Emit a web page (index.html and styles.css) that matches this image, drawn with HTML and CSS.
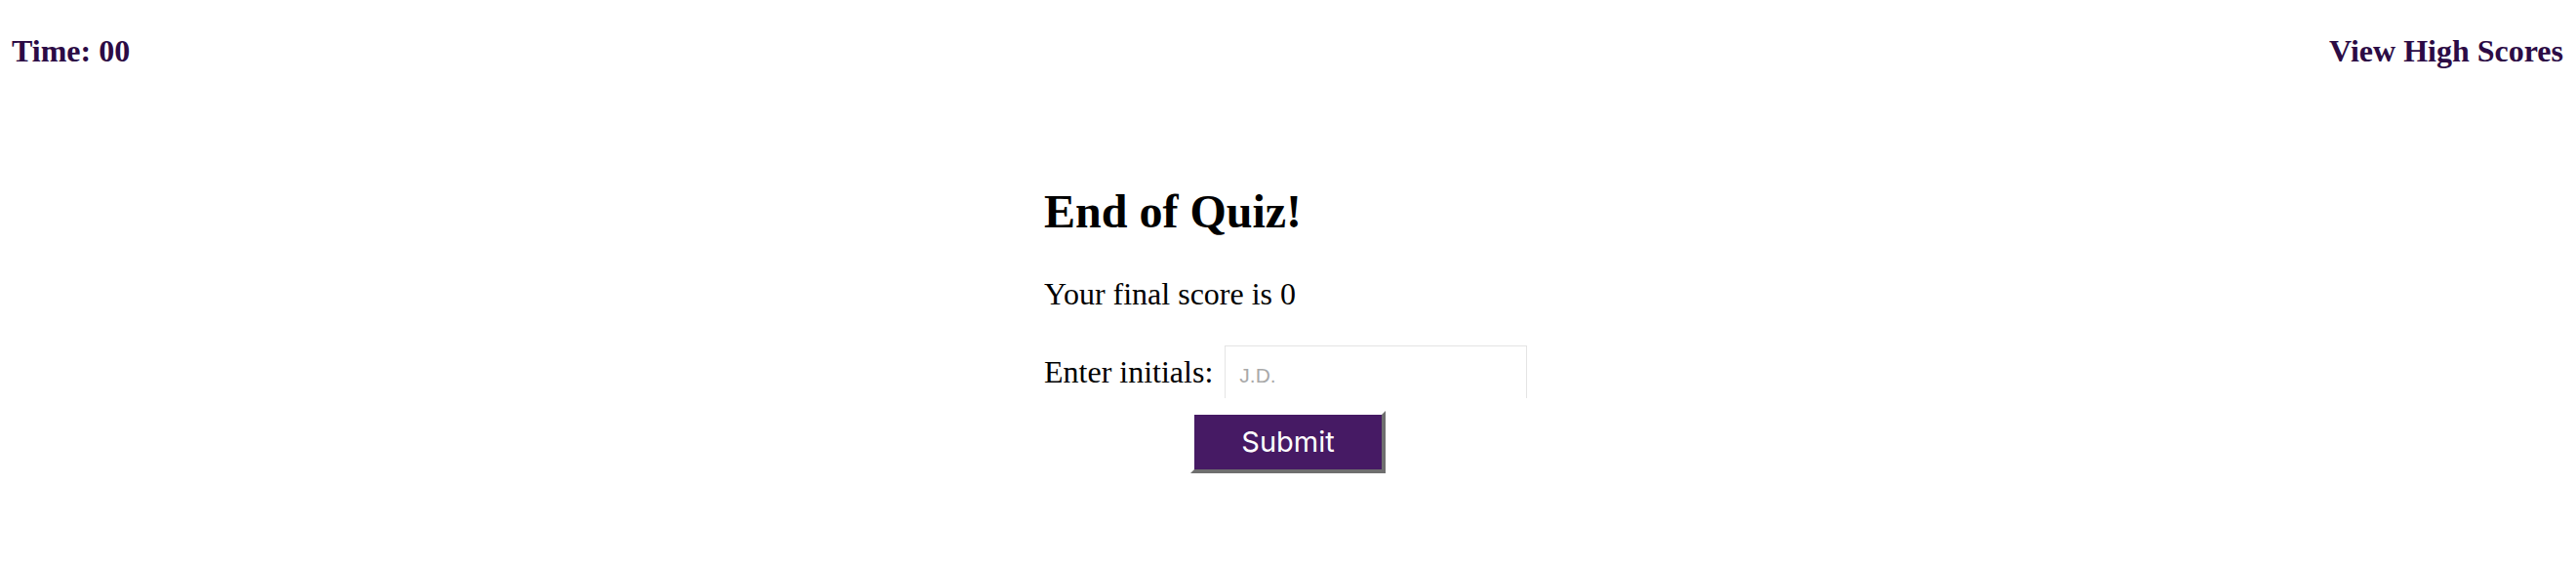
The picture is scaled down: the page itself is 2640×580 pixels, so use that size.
FILE: index.html
```html
<!DOCTYPE html>
<html lang="en">
<head>
<meta charset="utf-8">
<title>Quiz</title>
<link rel="stylesheet" href="styles.css">
</head>
<body>
<header class="topbar">
  <span class="timer">Time: 00</span>
  <a class="scores-link" href="#">View High Scores</a>
</header>
<main class="panel">
  <h1 class="title">End of Quiz!</h1>
  <p class="score">Your final score is 0</p>
  <form class="entry">
    <div class="entry-row">
      <label class="entry-label" for="initials">Enter initials:</label>
      <input class="entry-input" id="initials" type="text" placeholder="J.D.">
    </div>
    <div class="entry-actions">
      <button class="submit-btn" type="button">Submit</button>
    </div>
  </form>
</main>
</body>
</html>
```
FILE: styles.css
```css
html, body {
  margin: 0;
  padding: 0;
  background: #ffffff;
}

body {
  font-family: "Liberation Serif", "Times New Roman", serif;
  color: #000000;
}

.topbar {
  display: flex;
  justify-content: space-between;
  align-items: baseline;
  padding: 34px 13px 0 12px;
}

.timer,
.scores-link {
  font-size: 32px;
  font-weight: bold;
  line-height: 1.15;
  color: #2c0b45;
  text-decoration: none;
}

.panel {
  width: 500px;
  margin: 118px auto 0;
}

.title {
  margin: 0;
  font-size: 48px;
  font-weight: bold;
  line-height: 1.15;
}

.score {
  margin: 39px 0 0;
  font-size: 32px;
  line-height: 1.15;
}

.entry {
  margin: 34px 0 0;
}

.entry-row {
  display: flex;
  align-items: baseline;
  gap: 12px;
}

.entry-label {
  font-size: 32px;
  line-height: 1.15;
}

.entry-input {
  width: 310px;
  box-sizing: border-box;
  margin: 0;
  padding: 18px 14px 11px;
  border: 1px solid #e4e4e4;
  border-bottom: none;
  font-family: "Liberation Sans", Arial, sans-serif;
  font-size: 21px;
  line-height: 1.15;
  outline: none;
  background: #ffffff;
}

.entry-input::placeholder {
  color: #a9a9a9;
}

.entry-actions {
  display: flex;
  justify-content: center;
  margin-top: 13px;
}

.submit-btn {
  width: 200px;
  height: 64px;
  box-sizing: border-box;
  margin: 0;
  padding: 0;
  border-width: 4px;
  border-style: solid;
  border-color: #ffffff #6f6f6f #6f6f6f #ffffff;
  background: #461a64;
  color: #ffffff;
  font-family: Inter, "Liberation Sans", sans-serif;
  font-size: 29px;
  line-height: 1;
  cursor: pointer;
}
```
